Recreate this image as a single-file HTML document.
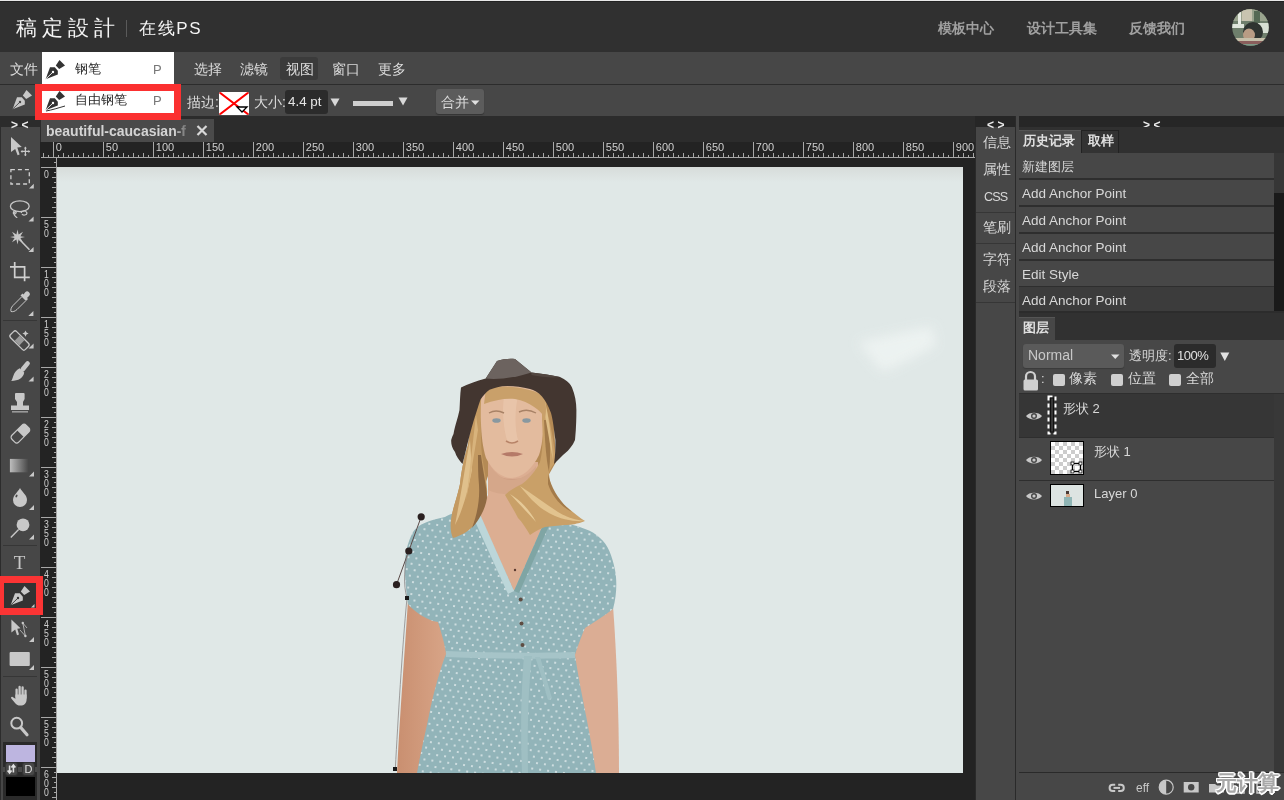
<!DOCTYPE html>
<html><head><meta charset="utf-8">
<style>
*{box-sizing:border-box;margin:0;padding:0}
html,body{width:1284px;height:800px;overflow:hidden;background:#232323;font-family:"Liberation Sans",sans-serif;color:#ddd}
body{will-change:transform}
.a{position:absolute}
svg{position:absolute;overflow:visible}
#hdr{left:0;top:0;width:1284px;height:52px;background:#303030;border-top:1px solid #e8e8e8}
.logo{left:16px;top:12px;font-size:20.5px;letter-spacing:5.1px;color:#f4f4f4;line-height:30px;white-space:nowrap}
.sep{left:126px;top:19px;width:1px;height:17px;background:#5a5a5a}
.logo2{left:139px;top:15px;font-size:17px;letter-spacing:1.6px;color:#f4f4f4;line-height:26px}
.nav{top:16.5px;font-size:14px;font-weight:bold;color:#a0a0a0;line-height:20px;white-space:nowrap}
#menu{left:0;top:52px;width:1284px;height:32px;background:#474747}
.it{position:absolute;top:9px;font-size:14px;color:#dcdcdc;line-height:16px;white-space:nowrap}
#opt{left:0;top:84px;width:1284px;height:32px;background:#474747;border-top:1px solid #2c2c2c}
.t{position:absolute;font-size:14px;color:#dcdcdc;line-height:16px;white-space:nowrap}
.dd{font-size:13px;color:#2a2a2a;line-height:16px;white-space:nowrap;position:absolute}
.pk{font-size:13px;color:#777;position:absolute;line-height:14px}
.ptxt{position:absolute;font-size:13px;color:#dcdcdc;line-height:16px;white-space:nowrap}
</style></head><body>
<svg width="0" height="0" style="position:absolute">
 <defs>
  <symbol id="pen" viewBox="0 0 32 32">
   <path d="M19.5 6L25 11.4L19.2 15L15.8 11.6Z"/>
   <path d="M10 13.2L14.8 13.2L17.8 16.8L17.8 20.6L5.6 25.2Z"/>
  </symbol>
 </defs>
</svg>
<!-- header -->
<div id="hdr" class="a">
  <div class="a" style="left:0;top:0;width:1284px;height:1px;background:#222"></div>
  <div class="a logo">稿定設計</div>
  <div class="a sep"></div>
  <div class="a logo2">在线PS</div>
  <div class="a nav" style="left:938px">模板中心</div>
  <div class="a nav" style="left:1027px">设计工具集</div>
  <div class="a nav" style="left:1129px">反馈我们</div>
  <svg style="left:1232px;top:8px" width="37" height="37" viewBox="0 0 37 37"><defs><clipPath id="avc"><circle cx="18.5" cy="18.5" r="18.3"/></clipPath></defs><g clip-path="url(#avc)">
<rect width="37" height="37" fill="#6f7f6c"/>
<rect x="0" y="0" width="37" height="12" fill="#9aa48e"/>
<rect x="6" y="3" width="3" height="16" fill="#e8ece4"/>
<rect x="10" y="0" width="10" height="12" fill="#c8c4b0"/>
<rect x="22" y="2" width="6" height="12" fill="#556a55"/>
<rect x="26" y="14" width="11" height="10" fill="#d8e0d4"/>
<rect x="0" y="15" width="12" height="4" fill="#e0e6dc"/>
<ellipse cx="21" cy="23" rx="10" ry="10" fill="#2e3430"/>
<ellipse cx="17" cy="26" rx="6" ry="6.5" fill="#b89c84"/>
<rect x="0" y="29" width="37" height="3" fill="#c6c0aa"/>
<rect x="0" y="32" width="37" height="3" fill="#8a5e5c"/>
<rect x="0" y="35" width="37" height="2" fill="#7e9a88"/>
</g></svg></div>
<!-- menu bar -->
<div id="menu" class="a">
  <div class="it" style="left:10px">文件</div>
  <div class="it" style="left:194px">选择</div>
  <div class="it" style="left:240px">滤镜</div>
  <div class="a" style="left:280px;top:5px;width:38px;height:23px;background:#3b3b3b;border-radius:3px"></div>
  <div class="it" style="left:286px">视图</div>
  <div class="it" style="left:332px">窗口</div>
  <div class="it" style="left:378px">更多</div>
</div>
<!-- options bar -->
<div id="opt" class="a">
  <svg style="left:-33px;top:-24px" width="32" height="32" fill="#c8c8c8"><use href="#pen"/><path d="M5.6 25.2L13 18" stroke="#474747" stroke-width="0.9"/><circle cx="13" cy="18" r="1.2" fill="#474747"/></svg>
  <div class="t" style="left:187px;top:9px">描边:</div>
  <div class="a" style="left:219px;top:7px;width:30px;height:23px;background:#fff;border-radius:2px;overflow:hidden">
    <svg style="left:0;top:0" width="30" height="23"><path d="M0 0L30 23M30 0L0 23" stroke="#f00" stroke-width="2"/><path d="M18 15H28L23 20Z" fill="#fff" stroke="#000" stroke-width="1.3"/></svg>
  </div>
  <div class="t" style="left:254px;top:9px">大小:</div>
  <div class="a" style="left:285px;top:5px;width:43px;height:24px;background:#2b2b2b;border-radius:3px"></div>
  <div class="t" style="left:288px;top:9px;color:#e6e6e6;font-size:13.4px">4.4 pt</div>
  <svg style="left:330px;top:13px" width="10" height="9"><path d="M0.5 0.5H9.5L5 8.5Z" fill="#d8d8d8"/></svg>
  <div class="a" style="left:353px;top:16px;width:40px;height:5px;background:#cfcfcf"></div>
  <svg style="left:398px;top:12px" width="10" height="9"><path d="M0.5 0.5H9.5L5 8.5Z" fill="#d8d8d8"/></svg>
  <div class="a" style="left:436px;top:4px;width:48px;height:25px;background:#5c5c5c;border-radius:3px;box-shadow:0 1px 1px #333"></div>
  <div class="t" style="left:441px;top:9px">合并</div>
  <svg style="left:471px;top:15px" width="9" height="6"><path d="M0 0.5H8.5L4.25 5Z" fill="#e0e0e0"/></svg>
</div>
<svg style="left:6.8px;top:84px" width="32" height="32" fill="#c8c8c8"><use href="#pen"/><path d="M5.6 25.2L13 18" stroke="#474747" stroke-width="0.9"/><circle cx="13" cy="18" r="1.2" fill="#474747"/></svg>
<!-- workspace base -->
<div class="a" style="left:0;top:116px;width:1284px;height:684px;background:#232323"></div>
<div class="a" style="left:40px;top:116px;width:935px;height:26px;background:#2c2c2c"></div>
<!-- tools panel -->
<div class="a" style="left:0;top:116px;width:40px;height:684px;background:#2c2c2c"></div>
<div class="a" style="left:1px;top:127px;width:39px;height:673px;background:#474747"></div>
<div class="a" style="left:11px;top:118px;font-size:12px;font-weight:bold;color:#ececec;letter-spacing:3.6px;line-height:14px">&gt;&lt;</div>
<div class="a" style="left:3px;top:320px;width:34px;height:1px;background:#363636"></div>
<div class="a" style="left:3px;top:545px;width:34px;height:1px;background:#363636"></div>
<div class="a" style="left:3px;top:676px;width:34px;height:1px;background:#363636"></div>
<svg style="left:0;top:0" width="44" height="800">
 <g fill="#c8c8c8" stroke="none">
  <!-- move -->
  <path d="M11 137L21.8 147L17.3 147.6L19.6 154.6L17.6 155.3L15.2 149L11 152Z"/>
  <path d="M25.4 147.4V155.4M21.4 151.4H29.4" stroke="#c8c8c8" stroke-width="1.2"/>
  <path d="M25.4 146.6L23.9 148.4H26.9ZM25.4 156.2L23.9 154.4H26.9ZM20.6 151.4L22.4 149.9V152.9ZM30.2 151.4L28.4 149.9V152.9Z"/>
  <!-- marquee -->
  <rect x="10.9" y="169.6" width="18.4" height="14.4" fill="none" stroke="#d0d0d0" stroke-width="1.3" stroke-dasharray="4 3"/>
  <!-- lasso -->
  <ellipse cx="19.8" cy="206.2" rx="9.4" ry="5.4" fill="none" stroke="#c8c8c8" stroke-width="1.3"/>
  <path d="M14 211C12 214 15 215 16 213C17 211 14 211 14 214C14 216 17 217 17 218M21 213C22 210 26 210 27 213C27 215 23 216 22 214" fill="none" stroke="#c8c8c8" stroke-width="1.2"/>
  <!-- wand -->
  <path d="M17.5 229.5L18.6 234.4L23 231.8L20.4 236.2L25 237L20.4 238L23 242.3L18.6 239.6L17.5 244.5L16.4 239.6L12 242.3L14.6 238L10 237L14.6 236.2L12 231.8L16.4 234.4Z"/>
  <path d="M19.5 239.5L29.5 249.8" stroke="#c8c8c8" stroke-width="1.6"/>
  <!-- crop -->
  <path d="M14.7 262V277.3H29.8M10 266.8H24.6V281.3" fill="none" stroke="#d0d0d0" stroke-width="1.7"/>
  <!-- eyedropper -->
  <path d="M25.2 292.2A2.6 2.6 0 0 1 29 296L27 298L28 299L26 301L20.5 295.5L22.5 293.5L23.5 294.5Z"/>
  <path d="M21.5 297L13 305.5C11 307.5 10.5 310 11 311.5C12.5 312 15 311.5 17 309.5L25.5 301" fill="none" stroke="#c8c8c8" stroke-width="1"/>
  <!-- healing -->
  <g transform="translate(19.5 340.5) rotate(45)"><rect x="-10.5" y="-4.3" width="21" height="8.6" rx="2.2" fill="none" stroke="#c8c8c8" stroke-width="1.3"/><rect x="-3.3" y="-3.6" width="6.6" height="7.2" fill="#9a9a9a"/></g>
  <path d="M25.5 330.5L26.5 332.6L28.6 333.6L26.5 334.6L25.5 336.7L24.5 334.6L22.4 333.6L24.5 332.6Z"/>
  <!-- brush -->
  <path d="M22.8 369.2L27.6 363.4" stroke="#c8c8c8" stroke-width="4.6" stroke-linecap="round"/>
  <path d="M19.6 368.2L24.2 372.6C23.4 378 18.5 381 11.2 381C13.4 378.6 12.6 372 19.6 368.2Z"/>
  <!-- stamp -->
  <path d="M16 393H23.6A1 1 0 0 1 24.6 394V399L23 402V405.6H29V410H11V405.6H17V402L15 399V394A1 1 0 0 1 16 393Z"/>
  <rect x="12" y="411" width="16" height="1.6" fill="#9a9a9a"/>
  <!-- eraser -->
  <g transform="translate(20.4 433.6) rotate(-45)"><rect x="-10" y="-4.8" width="20" height="9.6" rx="2.8" fill="none" stroke="#c8c8c8" stroke-width="1.2"/><path d="M0 -4.8H7.2A2.8 2.8 0 0 1 10 -2V2A2.8 2.8 0 0 1 7.2 4.8H0Z"/></g>
  <!-- gradient -->
  <defs><linearGradient id="gr" x1="0" x2="1"><stop offset="0" stop-color="#bdbdbd"/><stop offset="1" stop-color="#474747"/></linearGradient></defs>
  <rect x="9.9" y="458.9" width="18.5" height="13.4" fill="url(#gr)"/>
  <!-- drop -->
  <path d="M20 488C22 492 27 495 27 500A7 7 0 0 1 13 500C13 495 18 492 20 488Z"/>
  <ellipse cx="16.5" cy="496" rx="0.9" ry="1.5" fill="#474747" transform="rotate(30 16.5 496)"/>
  <!-- dodge -->
  <circle cx="23" cy="524.8" r="6.4"/>
  <path d="M18.6 529.4L10.8 537.4" stroke="#c8c8c8" stroke-width="1.4"/>
  <!-- T -->
  <text x="19.5" y="568.5" text-anchor="middle" font-family="Liberation Serif" font-size="19" fill="#c8c8c8">T</text>
  <!-- direct select -->
  <path d="M11.4 619.6L20.5 628.2L17.3 628.8L19 634.5L17 635.2L15.2 629.6L11.4 632.5Z"/>
  <path d="M22.8 623L25.4 636M22.8 623L27 628M25.4 636L20 630" fill="none" stroke="#c8c8c8" stroke-width="0.8"/>
  <circle cx="22.8" cy="623" r="1.2"/><circle cx="25.4" cy="636" r="1.2"/>
  <!-- rect -->
  <rect x="9.6" y="652" width="20.2" height="14" rx="1"/>
  <!-- hand -->
  <path d="M16.6 697V689.6M19.6 697V686.9M22.6 697V687.4M25.5 698V690.6" stroke="#c8c8c8" stroke-width="2.3" stroke-linecap="round"/>
  <path d="M15.4 694.5H26.6V699.5C26.6 703.2 24 705.6 20.6 705.6C17.6 705.6 16 704.2 14.6 702.4L11.3 698.4C10.6 697.5 11.5 696.3 12.6 696.9L15.4 698.8Z"/>
  <!-- zoom -->
  <circle cx="16.7" cy="723.2" r="5.4" fill="none" stroke="#c8c8c8" stroke-width="2"/>
  <path d="M21 727.8L27 734.8" stroke="#c8c8c8" stroke-width="3.2" stroke-linecap="round"/>
  <!-- corner triangles -->
  <path d="M29 188.5L33.8 183.7V188.5ZM28.5 221.6L33.6 216.5V221.6ZM28.5 252L33.6 246.9V252ZM28.3 316L33.4 310.9V316ZM28.5 348.5L33.6 343.4V348.5ZM28.5 381.5L33.6 376.4V381.5ZM29 476.5L34 471.5V476.5ZM29 510L34 505V510ZM29 539.5L34 534.5V539.5ZM29 642L34 637V642ZM29 670L34 665V670Z"/>
 </g>
</svg>
<!-- pen tool selected w/ red box -->
<div class="a" style="left:0;top:576px;width:43px;height:39px;background:#fb3434"></div>
<div class="a" style="left:4px;top:583px;width:32px;height:25px;background:#333"></div>
<svg style="left:4.7px;top:580px" width="32" height="32" fill="#c8c8c8"><use href="#pen"/><path d="M5.6 25.2L13 18" stroke="#333" stroke-width="0.9"/><circle cx="13" cy="18" r="1.2" fill="#333"/></svg>
<svg style="left:0;top:0" width="44" height="800"><path d="M31 607.5L34.5 604V607.5Z" fill="#c8c8c8"/></svg>
<!-- colors -->
<div class="a" style="left:3px;top:742px;width:34px;height:58px;background:#2a2a2a"></div>
<div class="a" style="left:6px;top:745px;width:29px;height:17px;background:#bdb5e0"></div>
<div class="a" style="left:3px;top:767px;width:34px;height:5px;background:#4a4a4a"></div>
<div class="a" style="left:6px;top:777px;width:29px;height:19px;background:#000"></div>
<div class="a" style="left:5px;top:762px;width:13px;height:14px;background:#474747;border:1px solid #333;border-radius:3px"></div>
<svg style="left:5px;top:762px" width="13" height="14"><path d="M4.6 3.5V10.5M2.6 8.5L4.6 11L6.6 8.5M8.4 10.5V3.5M6.4 5.5L8.4 3L10.4 5.5" stroke="#e0e0e0" stroke-width="1.6" fill="none"/></svg>
<div class="a" style="left:22px;top:762px;width:13px;height:14px;background:#474747;border:1px solid #333;border-radius:3px;font-size:11px;color:#e0e0e0;text-align:center;line-height:12px">D</div>
<!-- doc tab -->
<div class="a" style="left:41px;top:119px;width:173px;height:23px;background:#4a4a4a"></div>
<div class="a" style="left:46px;top:123px;width:145px;height:16px;overflow:hidden;white-space:nowrap;font-size:14px;font-weight:bold;color:#d4d4d4;line-height:16px;-webkit-mask-image:linear-gradient(90deg,#000 0,#000 128px,transparent 145px)">beautiful-caucasian-f</div>
<svg style="left:196px;top:125px" width="12" height="11"><path d="M1.5 1L10.5 10M10.5 1L1.5 10" stroke="#d8d8d8" stroke-width="2.2"/></svg>
<!-- rulers -->
<svg style="left:0;top:0;will-change:transform" width="1284" height="800"><path d="M43.5 153V157M48.5 155V157M53.5 142V157M58.5 155V157M63.5 153V157M68.5 155V157M73.5 153V157M78.5 155V157M83.5 153V157M88.5 155V157M93.5 153V157M98.5 155V157M103.5 142V157M108.5 155V157M113.5 153V157M118.5 155V157M123.5 153V157M128.5 155V157M133.5 153V157M138.5 155V157M143.5 153V157M148.5 155V157M153.5 142V157M158.5 155V157M163.5 153V157M168.5 155V157M173.5 153V157M178.5 155V157M183.5 153V157M188.5 155V157M193.5 153V157M198.5 155V157M203.5 142V157M208.5 155V157M213.5 153V157M218.5 155V157M223.5 153V157M228.5 155V157M233.5 153V157M238.5 155V157M243.5 153V157M248.5 155V157M253.5 142V157M258.5 155V157M263.5 153V157M268.5 155V157M273.5 153V157M278.5 155V157M283.5 153V157M288.5 155V157M293.5 153V157M298.5 155V157M303.5 142V157M308.5 155V157M313.5 153V157M318.5 155V157M323.5 153V157M328.5 155V157M333.5 153V157M338.5 155V157M343.5 153V157M348.5 155V157M353.5 142V157M358.5 155V157M363.5 153V157M368.5 155V157M373.5 153V157M378.5 155V157M383.5 153V157M388.5 155V157M393.5 153V157M398.5 155V157M403.5 142V157M408.5 155V157M413.5 153V157M418.5 155V157M423.5 153V157M428.5 155V157M433.5 153V157M438.5 155V157M443.5 153V157M448.5 155V157M453.5 142V157M458.5 155V157M463.5 153V157M468.5 155V157M473.5 153V157M478.5 155V157M483.5 153V157M488.5 155V157M493.5 153V157M498.5 155V157M503.5 142V157M508.5 155V157M513.5 153V157M518.5 155V157M523.5 153V157M528.5 155V157M533.5 153V157M538.5 155V157M543.5 153V157M548.5 155V157M553.5 142V157M558.5 155V157M563.5 153V157M568.5 155V157M573.5 153V157M578.5 155V157M583.5 153V157M588.5 155V157M593.5 153V157M598.5 155V157M603.5 142V157M608.5 155V157M613.5 153V157M618.5 155V157M623.5 153V157M628.5 155V157M633.5 153V157M638.5 155V157M643.5 153V157M648.5 155V157M653.5 142V157M658.5 155V157M663.5 153V157M668.5 155V157M673.5 153V157M678.5 155V157M683.5 153V157M688.5 155V157M693.5 153V157M698.5 155V157M703.5 142V157M708.5 155V157M713.5 153V157M718.5 155V157M723.5 153V157M728.5 155V157M733.5 153V157M738.5 155V157M743.5 153V157M748.5 155V157M753.5 142V157M758.5 155V157M763.5 153V157M768.5 155V157M773.5 153V157M778.5 155V157M783.5 153V157M788.5 155V157M793.5 153V157M798.5 155V157M803.5 142V157M808.5 155V157M813.5 153V157M818.5 155V157M823.5 153V157M828.5 155V157M833.5 153V157M838.5 155V157M843.5 153V157M848.5 155V157M853.5 142V157M858.5 155V157M863.5 153V157M868.5 155V157M873.5 153V157M878.5 155V157M883.5 153V157M888.5 155V157M893.5 153V157M898.5 155V157M903.5 142V157M908.5 155V157M913.5 153V157M918.5 155V157M923.5 153V157M928.5 155V157M933.5 153V157M938.5 155V157M943.5 153V157M948.5 155V157M953.5 142V157M958.5 155V157M963.5 153V157M968.5 155V157M973.5 153V157M41 157.5H975M54 162.5H56M41 167.5H56M54 172.5H56M52 177.5H56M54 182.5H56M52 187.5H56M54 192.5H56M52 197.5H56M54 202.5H56M52 207.5H56M54 212.5H56M41 217.5H56M54 222.5H56M52 227.5H56M54 232.5H56M52 237.5H56M54 242.5H56M52 247.5H56M54 252.5H56M52 257.5H56M54 262.5H56M41 267.5H56M54 272.5H56M52 277.5H56M54 282.5H56M52 287.5H56M54 292.5H56M52 297.5H56M54 302.5H56M52 307.5H56M54 312.5H56M41 317.5H56M54 322.5H56M52 327.5H56M54 332.5H56M52 337.5H56M54 342.5H56M52 347.5H56M54 352.5H56M52 357.5H56M54 362.5H56M41 367.5H56M54 372.5H56M52 377.5H56M54 382.5H56M52 387.5H56M54 392.5H56M52 397.5H56M54 402.5H56M52 407.5H56M54 412.5H56M41 417.5H56M54 422.5H56M52 427.5H56M54 432.5H56M52 437.5H56M54 442.5H56M52 447.5H56M54 452.5H56M52 457.5H56M54 462.5H56M41 467.5H56M54 472.5H56M52 477.5H56M54 482.5H56M52 487.5H56M54 492.5H56M52 497.5H56M54 502.5H56M52 507.5H56M54 512.5H56M41 517.5H56M54 522.5H56M52 527.5H56M54 532.5H56M52 537.5H56M54 542.5H56M52 547.5H56M54 552.5H56M52 557.5H56M54 562.5H56M41 567.5H56M54 572.5H56M52 577.5H56M54 582.5H56M52 587.5H56M54 592.5H56M52 597.5H56M54 602.5H56M52 607.5H56M54 612.5H56M41 617.5H56M54 622.5H56M52 627.5H56M54 632.5H56M52 637.5H56M54 642.5H56M52 647.5H56M54 652.5H56M52 657.5H56M54 662.5H56M41 667.5H56M54 672.5H56M52 677.5H56M54 682.5H56M52 687.5H56M54 692.5H56M52 697.5H56M54 702.5H56M52 707.5H56M54 712.5H56M41 717.5H56M54 722.5H56M52 727.5H56M54 732.5H56M52 737.5H56M54 742.5H56M52 747.5H56M54 752.5H56M52 757.5H56M54 762.5H56M41 767.5H56M54 772.5H56M52 777.5H56M54 782.5H56M52 787.5H56M54 792.5H56M52 797.5H56M56.5 158V800" stroke="#a8a8a8" stroke-width="1" fill="none"/><g font-family="Liberation Sans" font-size="11" fill="#cfcfcf"><text x="55.8" y="151">0</text><text x="105.8" y="151">50</text><text x="155.8" y="151">100</text><text x="205.8" y="151">150</text><text x="255.8" y="151">200</text><text x="305.8" y="151">250</text><text x="355.8" y="151">300</text><text x="405.8" y="151">350</text><text x="455.8" y="151">400</text><text x="505.8" y="151">450</text><text x="555.8" y="151">500</text><text x="605.8" y="151">550</text><text x="655.8" y="151">600</text><text x="705.8" y="151">650</text><text x="755.8" y="151">700</text><text x="805.8" y="151">750</text><text x="855.8" y="151">800</text><text x="905.8" y="151">850</text><text x="955.8" y="151">900</text></g><g font-family="Liberation Sans" font-size="10.6" fill="#cfcfcf" text-anchor="middle" transform="scale(0.82 1)"><text x="56.71" y="178.5">0</text><text x="56.71" y="228.5">5</text><text x="56.71" y="237.1">0</text><text x="56.71" y="278.5">1</text><text x="56.71" y="287.1">0</text><text x="56.71" y="295.7">0</text><text x="56.71" y="328.5">1</text><text x="56.71" y="337.1">5</text><text x="56.71" y="345.7">0</text><text x="56.71" y="378.5">2</text><text x="56.71" y="387.1">0</text><text x="56.71" y="395.7">0</text><text x="56.71" y="428.5">2</text><text x="56.71" y="437.1">5</text><text x="56.71" y="445.7">0</text><text x="56.71" y="478.5">3</text><text x="56.71" y="487.1">0</text><text x="56.71" y="495.7">0</text><text x="56.71" y="528.5">3</text><text x="56.71" y="537.1">5</text><text x="56.71" y="545.7">0</text><text x="56.71" y="578.5">4</text><text x="56.71" y="587.1">0</text><text x="56.71" y="595.7">0</text><text x="56.71" y="628.5">4</text><text x="56.71" y="637.1">5</text><text x="56.71" y="645.7">0</text><text x="56.71" y="678.5">5</text><text x="56.71" y="687.1">0</text><text x="56.71" y="695.7">0</text><text x="56.71" y="728.5">5</text><text x="56.71" y="737.1">5</text><text x="56.71" y="745.7">0</text><text x="56.71" y="778.5">6</text><text x="56.71" y="787.1">0</text><text x="56.71" y="795.7">0</text></g></svg>
<!-- canvas photo -->
<svg style="left:57px;top:167px" width="906" height="606" viewBox="57 167 906 606">
 <defs>
  <linearGradient id="bgv" x1="0" y1="0" x2="0" y2="1"><stop offset="0" stop-color="#d7dcda"/><stop offset="0.025" stop-color="#e0e8e7"/><stop offset="1" stop-color="#e0e8e7"/></linearGradient>
  <radialGradient id="blob" cx="0.5" cy="0.5" r="0.5"><stop offset="0" stop-color="#f4f7f6"/><stop offset="1" stop-color="#e2e8e6" stop-opacity="0"/></radialGradient>
  <pattern id="dots" width="8" height="12" patternUnits="userSpaceOnUse" patternTransform="rotate(8)"><circle cx="2" cy="3" r="0.95" fill="#e6eef0"/><circle cx="6" cy="9" r="0.95" fill="#e6eef0"/></pattern>
  <linearGradient id="hairL" x1="0" y1="0" x2="0" y2="1"><stop offset="0" stop-color="#b8894f"/><stop offset="1" stop-color="#d2a86c"/></linearGradient>
  <linearGradient id="armL" x1="0" y1="0" x2="1" y2="0"><stop offset="0" stop-color="#c98f70"/><stop offset="1" stop-color="#d9a689"/></linearGradient>
 </defs>
 <rect x="57" y="167" width="906" height="606" fill="url(#bgv)"/>
 <filter id="bl" x="-50%" y="-50%" width="200%" height="200%"><feGaussianBlur stdDeviation="6"/></filter><path d="M858 342L932 326L936 346L905 362L882 372Z" fill="#eff4f3" filter="url(#bl)" opacity="0.85"/>
 <!-- hair back -->
 <path d="M478 384L552 384L556 462L548 476L490 476L476 450Z" fill="#b48a55"/>
 <path d="M482 392C475 410 470 430 468 445C465 455 462 466 460 484C457 498 453 508 452 516C451 524 453 530 454 534C462 530 470 520 474 510C480 504 484 498 484 488L490 470L536 470C540 480 548 490 552 492Z" fill="#b48a55"/>
 <!-- neck & chest -->
 <path d="M488 462L538 462L540 500C545 505 550 512 553 518L514 594L473 505C480 502 486 500 488 495Z" fill="#dcae92"/>
 <path d="M490 470C500 482 525 482 537 470L538 488C525 495 500 495 489 488Z" fill="#cf9f84"/>
 <!-- arms -->
 <path d="M408 600C405 650 400 710 397 773L432 773C440 730 448 690 450 656C448 640 445 628 440 615Z" fill="url(#armL)"/>
 <path d="M575 626C572 660 575 710 585 773L619 773C619 720 617 660 613 606Z" fill="#dbad94"/>
 <!-- dress -->
 <path d="M475 505C462 510 450 514 445 517C430 520 418 524 413 532C406 545 404 560 405 575C406 590 407 598 408 604C414 612 425 618 433 621L438 622C442 635 445 645 446 654C438 675 432 700 429 715C425 735 420 755 417 773L596 773C590 730 580 690 575 655C578 645 582 635 585 628C595 622 605 615 613 609C617 595 617 580 615 570C612 555 608 545 600 538C592 530 580 527 570 524C560 520 552 518 547 516L514 591Z" fill="#92b4b9"/>
 <path d="M475 505C462 510 450 514 445 517C430 520 418 524 413 532C406 545 404 560 405 575C406 590 407 598 408 604C414 612 425 618 433 621L438 622C442 635 445 645 446 654C438 675 432 700 429 715C425 735 420 755 417 773L596 773C590 730 580 690 575 655C578 645 582 635 585 628C595 622 605 615 613 609C617 595 617 580 615 570C612 555 608 545 600 538C592 530 580 527 570 524C560 520 552 518 547 516L514 591Z" fill="url(#dots)"/>
 <path d="M446 651C490 653 540 653 575 652L575 658C540 659 490 659 446 657Z" fill="#a6c4c8"/>
 <path d="M524 656C522 680 520 720 522 773L528 773C527 720 529 680 532 656Z" fill="#9fbfc3"/>
 <path d="M535 657C540 670 545 690 548 700L552 698C549 688 544 670 540 657Z" fill="#9fbfc3"/>
 <!-- collar edges -->
 <path d="M475 503L514 591L508 594L469 508Z" fill="#bcd6d9"/>
 <path d="M547 516L514 591L519 593L552 519Z" fill="#7fa5a4"/>
 <circle cx="461" cy="570" r="0" fill="none"/>
 <!-- buttons -->
 <circle cx="520.7" cy="599.5" r="2" fill="#5e4c42"/><circle cx="521.5" cy="623.5" r="2" fill="#5e4c42"/><circle cx="522.5" cy="645" r="2" fill="#5e4c42"/>
 <circle cx="515" cy="570" r="1.2" fill="#5a3a30"/>
 <!-- hair front -->
 <path d="M482 392C475 410 470 430 468 445C465 455 462 466 460 484C457 498 452 510 451 520C450 528 451 534 453 538C460 536 468 532 474 525C480 515 486 505 487 495C488 485 484 470 482 455C480 435 481 410 482 404Z" fill="#c49a62"/>
 <path d="M481 455C483 472 487 488 487 498C485 510 479 520 472 528C477 515 480 500 479 485C478 475 478 465 478 455Z" fill="#8f6a42"/>
 <path d="M470 440C466 460 462 490 455 525C463 510 468 490 472 470Z" fill="#e0c08c"/>
 <path d="M476 415C473 440 470 470 466 500C470 480 474 455 478 430Z" fill="#d8b37c"/>
 <!-- face -->
 <path d="M482 384C480 410 480 440 486 458C493 472 503 478 511 478C522 478 533 468 539 455C544 440 545 415 544 384Z" fill="#e3bb9e"/>
 <path d="M488 462C495 474 503 480 511 480C520 480 530 474 536 466L537 490C525 496 500 496 488 490Z" fill="#d5a78a"/>
 <path d="M505 392C501 410 504 430 507 440C511 444 517 443 518 440C515 430 514 410 519 392Z" fill="#ecccb2" opacity="0.55"/>
 <path d="M489 413Q496 409 504 413M519 412Q527 408 536 413" stroke="#a88266" stroke-width="1.4" fill="none"/>
 <ellipse cx="496.5" cy="420.5" rx="4.2" ry="2.3" fill="#8898a0"/>
 <ellipse cx="526.5" cy="420.5" rx="4.2" ry="2.3" fill="#8898a0"/>
 <path d="M506 441Q512 445 518 441" stroke="#b88468" stroke-width="1.6" fill="none"/>
 <path d="M501 454Q512 450 523 454Q512 459 501 454Z" fill="#b57a68"/>
 <!-- right hair -->
 <path d="M542 398C548 410 552 430 556 460C553 466 549 470 549 474C550 482 551 488 552 492C558 500 564 505 568 508C574 513 580 518 585 521C578 524 570 525 565 525C558 526 550 526 545 527C538 530 534 532 530 535C526 528 522 522 518 518C514 510 509 502 505 495C510 490 516 487 522 484C530 478 536 470 540 462C543 450 543 435 542 420Z" fill="#c9a068"/>
 <path d="M520 486C532 494 546 504 558 512C566 517 576 520 585 521C570 522 556 518 544 510C536 505 528 496 520 486Z" fill="#e2c38e"/>
 <path d="M510 494C520 500 530 510 536 522C530 515 520 505 510 494Z" fill="#e6ca98"/>
 <path d="M548 474C552 490 560 502 572 512C560 506 552 496 548 484Z" fill="#a47b4a"/>
 <path d="M548 420C550 440 551 455 549 472C546 460 545 440 544 420Z" fill="#a27a4a"/>
 <path d="M545 400C549 420 552 440 553 460C550 445 547 425 543 405Z" fill="#dfbf88"/>
 <!-- hair under brim -->
 <path d="M486 388C500 385 525 386 543 395C546 402 547 410 545 418C540 410 530 402 515 399C505 398 495 400 484 404Z" fill="#c9a06a"/>
 <!-- hat -->
 <path d="M485.7 378.5L497 361C503 359 509 358.5 515 359L531.5 372.5C542 374 552 375 560 377C566 380 570 383 572 387.5C575 395 576.4 402 576.4 410C576.4 420 576 430 575 440C572 447 568 451 563 455C560 458 557 461 554 464C555.4 455 555.4 448 555.4 440C554 430 553 420 551 413C548 405 545 400 542 396.5C538 392 534 390 530 389C522 387 515 386 507.5 386C500 386 494 388 489.5 389.7C486 392 483 396 480.5 399.5C477 410 473 422 470 434C467 445 465 455 462.5 464C459 460 456 456 455 452C452 448 451 444 451.2 440C452 437 453 435 453.5 434C455 425 458 418 459.5 410C460 402 460 395 461 387.5C468 384 476 381 485.7 378.5Z" fill="#433630"/>
 <path d="M485.7 378.5L497 361C503 359 509 358.5 515 359L531.5 372.5C518 377 500 380 485.7 378.5Z" fill="#6c635f"/>
 <path d="M531.5 372.5C542 374 552 375 560 377C552 378 542 377 531.5 375Z" fill="#524640"/>
 <!-- pen path -->
 <path d="M421.2 516.8L396.5 584.7" stroke="#5a4a48" stroke-width="1" fill="none"/>
 <path d="M408.8 551C404 565 403 585 407 598C402 650 398 720 395.3 769" stroke="#8c8888" stroke-width="0.8" fill="none"/>
 <circle cx="421.2" cy="516.8" r="3.6" fill="#2a2020"/>
 <circle cx="408.8" cy="551" r="3.6" fill="#2a2020"/>
 <circle cx="396.5" cy="584.7" r="3.6" fill="#2a2020"/>
 <rect x="405" y="596" width="4" height="4" fill="#1a1a1a"/>
 <rect x="393" y="767" width="4" height="4" fill="#1a1a1a"/>
</svg>
<!-- right column -->
<div class="a" style="left:975px;top:116px;width:44px;height:684px;background:#474747"></div>
<div class="a" style="left:975px;top:116px;width:40px;height:11px;background:#262626"></div>
<div class="a" style="left:975px;top:127px;width:1px;height:673px;background:#2a2a2a"></div>
<div class="a" style="left:1015px;top:116px;width:1px;height:684px;background:#2a2a2a"></div>
<div class="a" style="left:987px;top:118px;font-size:12px;font-weight:bold;color:#ececec;letter-spacing:3.6px;line-height:14px">&lt;&gt;</div>
<div class="ptxt" style="left:983px;top:134px;font-size:14px;color:#d8d8d8">信息</div>
<div class="ptxt" style="left:983px;top:161px;font-size:14px;color:#d8d8d8">属性</div>
<div class="ptxt" style="left:984px;top:189px;font-size:12.6px;letter-spacing:-0.9px;color:#d8d8d8">CSS</div>
<div class="a" style="left:976px;top:212px;width:39px;height:1px;background:#363636"></div>
<div class="ptxt" style="left:983px;top:219px;font-size:14px;color:#d8d8d8">笔刷</div>
<div class="a" style="left:976px;top:243px;width:39px;height:1px;background:#363636"></div>
<div class="ptxt" style="left:983px;top:251px;font-size:14px;color:#d8d8d8">字符</div>
<div class="ptxt" style="left:983px;top:278px;font-size:14px;color:#d8d8d8">段落</div>
<div class="a" style="left:976px;top:302px;width:39px;height:1px;background:#363636"></div>
<!-- right panel -->
<div class="a" style="left:1019px;top:116px;width:265px;height:11px;background:#262626"></div>
<div class="a" style="left:1143px;top:118px;font-size:12px;font-weight:bold;color:#ececec;letter-spacing:3.6px;line-height:14px">&gt;&lt;</div>
<div class="a" style="left:1019px;top:127px;width:265px;height:26px;background:#303030"></div>
<div class="a" style="left:1019px;top:130px;width:62px;height:23px;background:#474747"></div>
<div class="a" style="left:1019px;top:130px;width:99px;height:1px;background:#555"></div>
<div class="a" style="left:1081px;top:130px;width:38px;height:23px;background:#333;border:1px solid #222;border-bottom:none"></div>
<div class="ptxt" style="left:1023px;top:133px;font-size:13px;font-weight:bold;color:#e0e0e0">历史记录</div>
<div class="ptxt" style="left:1088px;top:133px;font-size:13px;font-weight:bold;color:#e0e0e0">取样</div>
<div class="a" style="left:1274px;top:153px;width:10px;height:40px;background:#363636"></div>
<div class="a" style="left:1274px;top:193px;width:10px;height:120px;background:#1a1a1a"></div>
<div class="a" style="left:1019px;top:153px;width:255px;height:25px;background:#474747"></div>
<div class="a" style="left:1019px;top:178px;width:255px;height:2px;background:#2e2e2e"></div>
<div class="a" style="left:1019px;top:180px;width:255px;height:25px;background:#474747"></div>
<div class="a" style="left:1019px;top:205px;width:255px;height:2px;background:#2e2e2e"></div>
<div class="a" style="left:1019px;top:207px;width:255px;height:25px;background:#474747"></div>
<div class="a" style="left:1019px;top:232px;width:255px;height:2px;background:#2e2e2e"></div>
<div class="a" style="left:1019px;top:234px;width:255px;height:25px;background:#474747"></div>
<div class="a" style="left:1019px;top:259px;width:255px;height:2px;background:#2e2e2e"></div>
<div class="a" style="left:1019px;top:261px;width:255px;height:25px;background:#474747"></div>
<div class="a" style="left:1019px;top:286px;width:255px;height:1px;background:#2e2e2e"></div>
<div class="a" style="left:1019px;top:287px;width:255px;height:24px;background:#3c3c3c"></div>
<div class="a" style="left:1019px;top:311px;width:265px;height:2px;background:#2c2c2c"></div>
<div class="ptxt" style="left:1022px;top:159px;font-size:13px;color:#d8d8d8">新建图层</div>
<div class="ptxt" style="left:1022px;top:186px;font-size:13.5px;color:#d8d8d8">Add Anchor Point</div>
<div class="ptxt" style="left:1022px;top:213px;font-size:13.5px;color:#d8d8d8">Add Anchor Point</div>
<div class="ptxt" style="left:1022px;top:240px;font-size:13.5px;color:#d8d8d8">Add Anchor Point</div>
<div class="ptxt" style="left:1022px;top:267px;font-size:13.5px;color:#d8d8d8">Edit Style</div>
<div class="ptxt" style="left:1022px;top:293px;font-size:13.5px;color:#d8d8d8">Add Anchor Point</div>
<!-- layers -->
<div class="a" style="left:1019px;top:313px;width:265px;height:27px;background:#313131"></div>
<div class="a" style="left:1019px;top:317px;width:36px;height:23px;background:#474747;border-top:1px solid #555"></div>
<div class="ptxt" style="left:1023px;top:320px;font-size:13px;font-weight:bold;color:#e0e0e0">图层</div>
<div class="a" style="left:1019px;top:340px;width:265px;height:53px;background:#474747"></div>
<div class="a" style="left:1023px;top:344px;width:101px;height:24px;background:#5a5a5a;border-radius:3px;box-shadow:0 1px 1px #3a3a3a"></div>
<div class="ptxt" style="left:1028px;top:347px;font-size:14px;color:#c8c8c8">Normal</div>
<svg style="left:1111px;top:354px" width="9" height="6"><path d="M0 0.5H8.5L4.25 5Z" fill="#e0e0e0"/></svg>
<div class="ptxt" style="left:1129px;top:348px;font-size:13px;color:#d8d8d8">透明度:</div>
<div class="a" style="left:1174px;top:344px;width:42px;height:24px;background:#2b2b2b;border-radius:3px"></div>
<div class="ptxt" style="left:1177px;top:348px;font-size:13px;color:#e0e0e0;letter-spacing:-0.5px">100%</div>
<svg style="left:1220px;top:352px" width="10" height="10"><path d="M0.3 0.5H9.3L4.8 9Z" fill="#e0e0e0"/></svg>
<svg style="left:1022px;top:370px" width="20" height="22"><path d="M4 10V6.5A4.5 4.5 0 0 1 13 6.5V10" stroke="#d0d0d0" stroke-width="2.2" fill="none"/><rect x="1.5" y="9.5" width="14.5" height="11" rx="1.5" fill="#d0d0d0"/></svg>
<div class="ptxt" style="left:1041px;top:371px;font-size:13px;color:#d8d8d8">:</div>
<div class="a" style="left:1053px;top:374px;width:12px;height:12px;background:#cfcfcf;border-radius:2px"></div>
<div class="ptxt" style="left:1069px;top:371px;font-size:13.5px;color:#d8d8d8">像素</div>
<div class="a" style="left:1111px;top:374px;width:12px;height:12px;background:#cfcfcf;border-radius:2px"></div>
<div class="ptxt" style="left:1128px;top:371px;font-size:13.5px;color:#d8d8d8">位置</div>
<div class="a" style="left:1169px;top:374px;width:12px;height:12px;background:#cfcfcf;border-radius:2px"></div>
<div class="ptxt" style="left:1186px;top:371px;font-size:13.5px;color:#d8d8d8">全部</div>
<div class="a" style="left:1019px;top:393px;width:265px;height:1px;background:#2e2e2e"></div>
<div class="a" style="left:1019px;top:394px;width:265px;height:378px;background:#474747"></div>
<div class="a" style="left:1274px;top:394px;width:10px;height:378px;background:#383838"></div>
<div class="a" style="left:1019px;top:394px;width:255px;height:43px;background:#363636"></div>
<div class="a" style="left:1019px;top:437px;width:255px;height:1px;background:#2e2e2e"></div>
<div class="a" style="left:1019px;top:480px;width:255px;height:1px;background:#2e2e2e"></div>
<!-- eyes -->
<svg style="left:1025px;top:409px" width="18" height="14"><path d="M1 7C4 2.5 14 2.5 17 7C14 11.5 4 11.5 1 7Z" fill="#c8c8c8"/><circle cx="9" cy="7" r="3" fill="#474747"/><circle cx="9" cy="7" r="1.6" fill="#c8c8c8"/></svg>
<svg style="left:1025px;top:453px" width="18" height="14"><path d="M1 7C4 2.5 14 2.5 17 7C14 11.5 4 11.5 1 7Z" fill="#c8c8c8"/><circle cx="9" cy="7" r="3" fill="#474747"/><circle cx="9" cy="7" r="1.6" fill="#c8c8c8"/></svg>
<svg style="left:1025px;top:489px" width="18" height="14"><path d="M1 7C4 2.5 14 2.5 17 7C14 11.5 4 11.5 1 7Z" fill="#c8c8c8"/><circle cx="9" cy="7" r="3" fill="#474747"/><circle cx="9" cy="7" r="1.6" fill="#c8c8c8"/></svg>
<!-- thumbs -->
<svg style="left:1047px;top:395px" width="11" height="40"><rect x="1.5" y="1.5" width="7" height="37" fill="none" stroke="#fff" stroke-width="2" stroke-dasharray="4 3"/><rect x="3.5" y="3" width="3" height="34" fill="none" stroke="#111" stroke-width="1"/></svg>
<div class="ptxt" style="left:1063px;top:401px;font-size:13px;color:#d8d8d8">形状 2</div>
<div class="a" style="left:1050px;top:441px;width:34px;height:34px;border:1px solid #000;background-color:#fff;background-image:linear-gradient(45deg,#ccc 25%,transparent 25%,transparent 75%,#ccc 75%),linear-gradient(45deg,#ccc 25%,transparent 25%,transparent 75%,#ccc 75%);background-size:8px 8px;background-position:0 0,4px 4px"></div>
<svg style="left:1070px;top:460px" width="14" height="14"><rect x="2.5" y="3.5" width="8" height="8" fill="none" stroke="#000" stroke-width="1"/><rect x="1" y="2" width="3" height="3" fill="#fff" stroke="#000" stroke-width="0.8"/><rect x="9" y="2" width="3" height="3" fill="#fff" stroke="#000" stroke-width="0.8"/><rect x="1" y="10" width="3" height="3" fill="#fff" stroke="#000" stroke-width="0.8"/><rect x="9" y="10" width="3" height="3" fill="#fff" stroke="#000" stroke-width="0.8"/></svg>
<div class="ptxt" style="left:1094px;top:444px;font-size:13px;color:#d8d8d8">形状 1</div>
<div class="a" style="left:1050px;top:484px;width:34px;height:23px;border:1px solid #000;background:#dde4e2;overflow:hidden">
  <div class="a" style="left:15px;top:6px;width:3px;height:3px;background:#4a3a35"></div>
  <div class="a" style="left:15px;top:9px;width:4px;height:3px;background:#d7aa8a"></div>
  <div class="a" style="left:13px;top:12px;width:8px;height:10px;background:#8fb5b5"></div>
</div>
<div class="ptxt" style="left:1094px;top:486px;font-size:13px;color:#d8d8d8">Layer 0</div>
<!-- bottom bar -->
<div class="a" style="left:1019px;top:772px;width:265px;height:1px;background:#2a2a2a"></div>
<div class="a" style="left:1019px;top:773px;width:265px;height:27px;background:#474747"></div>
<svg style="left:1105px;top:778px" width="180" height="20">
 <g fill="none" stroke="#c8c8c8" stroke-width="2"><rect x="4.6" y="6.8" width="14.2" height="6.2" rx="3.1"/><path d="M8.5 9.9H15"/></g><rect x="10.2" y="5" width="3" height="3" fill="#474747"/><rect x="10.2" y="12" width="3" height="3" fill="#474747"/>
 <text x="31" y="13.5" font-family="Liberation Sans" font-size="12" fill="#c8c8c8">eff</text>
 <circle cx="61.2" cy="9.2" r="7" fill="none" stroke="#c8c8c8" stroke-width="1.2"/><path d="M61.2 2.2A7 7 0 0 0 61.2 16.2Z" fill="#c8c8c8"/>
 <rect x="78.7" y="4" width="15" height="10.5" fill="#c8c8c8"/><circle cx="86.2" cy="9.2" r="3.2" fill="#474747"/>
 <path d="M104 6H110L112 7.5H119V14.5H104Z" fill="#c8c8c8"/>
 <rect x="128" y="4" width="11" height="11" fill="none" stroke="#c8c8c8" stroke-width="1.5"/>
 <path d="M150 5H160M152 5V15H158V5" stroke="#c8c8c8" stroke-width="1.5" fill="none"/>
</svg>
<!-- watermark -->
<div class="a" style="left:1216px;top:770px;font-size:21px;font-weight:900;color:#a8a8a8;letter-spacing:0px;line-height:26px;-webkit-text-stroke:0;text-shadow:1px 1px 0 #fff,-1px -1px 0 #fff,1px -1px 0 #fff,-1px 1px 0 #fff,0 1.5px 0 #fff,1.5px 0 0 #fff,0 -1.5px 0 #fff,-1.5px 0 0 #fff">元计算</div>
<!-- dropdown -->
<div class="a" style="left:42px;top:52px;width:132px;height:32px;background:#fff"></div>
<svg style="left:40px;top:54px" width="32" height="32" fill="#333"><use href="#pen"/><path d="M5.6 25.2L13 18" stroke="#fff" stroke-width="0.9"/><circle cx="13" cy="18" r="1.2" fill="#fff"/></svg>
<div class="dd" style="left:75px;top:61px;font-size:13.4px">钢笔</div>
<div class="pk" style="left:153px;top:63px">P</div>
<div class="a" style="left:35px;top:84px;width:146px;height:36px;background:#fb3030"></div>
<div class="a" style="left:42px;top:91px;width:132px;height:22px;background:#fff"></div>
<svg style="left:40px;top:85px" width="32" height="32" fill="#333"><use href="#pen"/><path d="M5.6 25.2L13 18" stroke="#fff" stroke-width="0.9"/><circle cx="13" cy="18" r="1.2" fill="#fff"/><path d="M6 26C12 25 18 23 25 21" stroke="#333" stroke-width="1" fill="none"/></svg>
<div class="dd" style="left:75px;top:92px">自由钢笔</div>
<div class="pk" style="left:153px;top:94px">P</div>
</body></html>
